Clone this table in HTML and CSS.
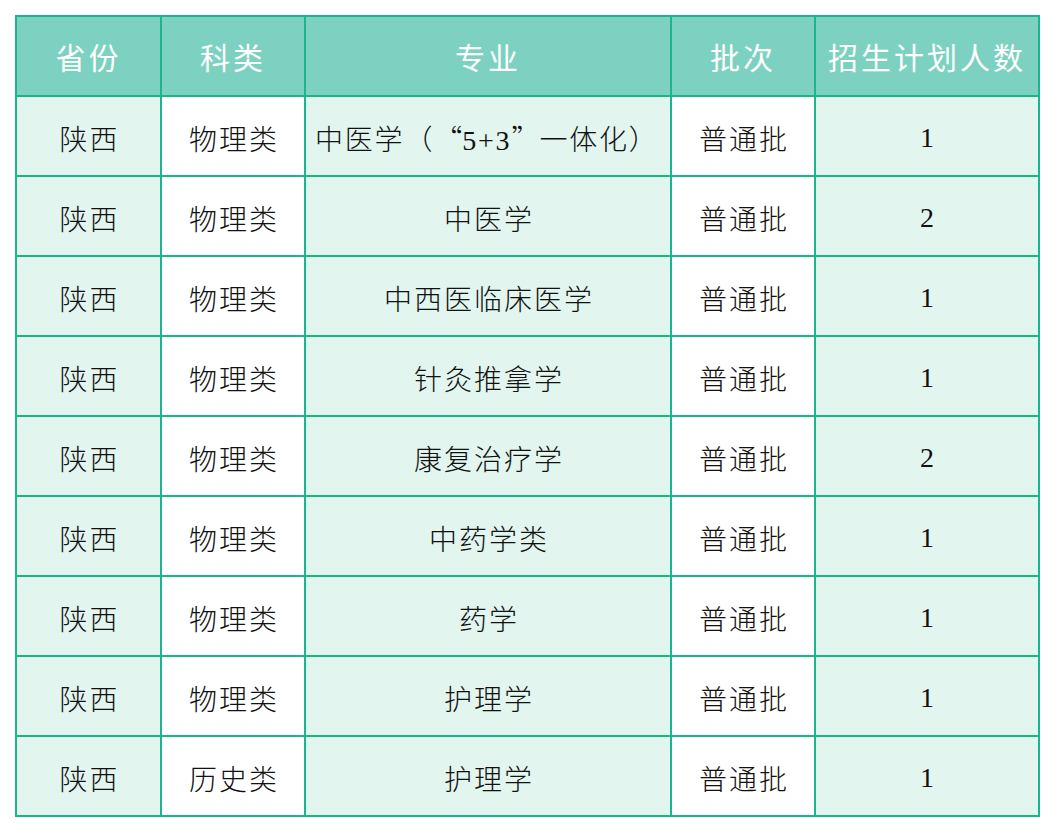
FILE: index.html
```html
<!DOCTYPE html>
<html lang="zh">
<head>
<meta charset="utf-8">
<link rel="stylesheet" href="styles.css">
</head>
<body>
<table class="plan">
  <colgroup>
    <col class="c1"><col class="c2"><col class="c3"><col class="c4"><col class="c5">
  </colgroup>
  <thead>
    <tr><th>省份</th><th>科类</th><th>专业</th><th>批次</th><th>招生计划人数</th></tr>
  </thead>
  <tbody>
    <tr><td>陕西</td><td>物理类</td><td class="left">中医学（<span class="fw">“</span>5+3<span class="fw">”</span>一体化）</td><td>普通批</td><td>1</td></tr>
    <tr><td>陕西</td><td>物理类</td><td>中医学</td><td>普通批</td><td>2</td></tr>
    <tr><td>陕西</td><td>物理类</td><td>中西医临床医学</td><td>普通批</td><td>1</td></tr>
    <tr><td>陕西</td><td>物理类</td><td>针灸推拿学</td><td>普通批</td><td>1</td></tr>
    <tr><td>陕西</td><td>物理类</td><td>康复治疗学</td><td>普通批</td><td>2</td></tr>
    <tr><td>陕西</td><td>物理类</td><td>中药学类</td><td>普通批</td><td>1</td></tr>
    <tr><td>陕西</td><td>物理类</td><td>药学</td><td>普通批</td><td>1</td></tr>
    <tr><td>陕西</td><td>物理类</td><td>护理学</td><td>普通批</td><td>1</td></tr>
    <tr><td>陕西</td><td>历史类</td><td>护理学</td><td>普通批</td><td>1</td></tr>
  </tbody>
</table>
</body>
</html>
```
FILE: styles.css
```css
html, body {
  margin: 0;
  padding: 0;
  background: #ffffff;
}
body {
  padding: 15px 0 0 15px;
  font-family: "Liberation Serif", "Noto Sans CJK SC", serif;
}
.plan {
  border-collapse: collapse;
  table-layout: fixed;
  width: 1023px;
  border: 2px solid #1cb68e;
}
.c1 { width: 145px; }
.c2 { width: 144px; }
.c3 { width: 366px; }
.c4 { width: 144px; }
.c5 { width: 224px; }
.plan th, .plan td {
  border: 2px solid #1cb68e;
  height: 78px;
  padding: 0;
  text-align: center;
  vertical-align: middle;
  font-weight: normal;
  white-space: nowrap;
}
.plan th {
  background: #7dd1c0;
  color: #ffffff;
  font-size: 30px;
  letter-spacing: 3px;
}
.plan td {
  color: #111111;
  font-size: 28px;
  font-weight: 300;
  letter-spacing: 2px;
  height: 74px;
  padding-top: 4px;
  padding-left: 2px;
}
.plan td:nth-child(odd) {
  background: #e2f5ef;
}
.plan td:nth-child(even) {
  background: #ffffff;
}
.plan td.left {
  text-align: left;
  padding-left: 9px;
  letter-spacing: 1.8px;
}
.fw {
  font-family: "Noto Sans CJK SC", sans-serif;
  display: inline-block;
  width: 28px;
  text-align: center;
}
```
